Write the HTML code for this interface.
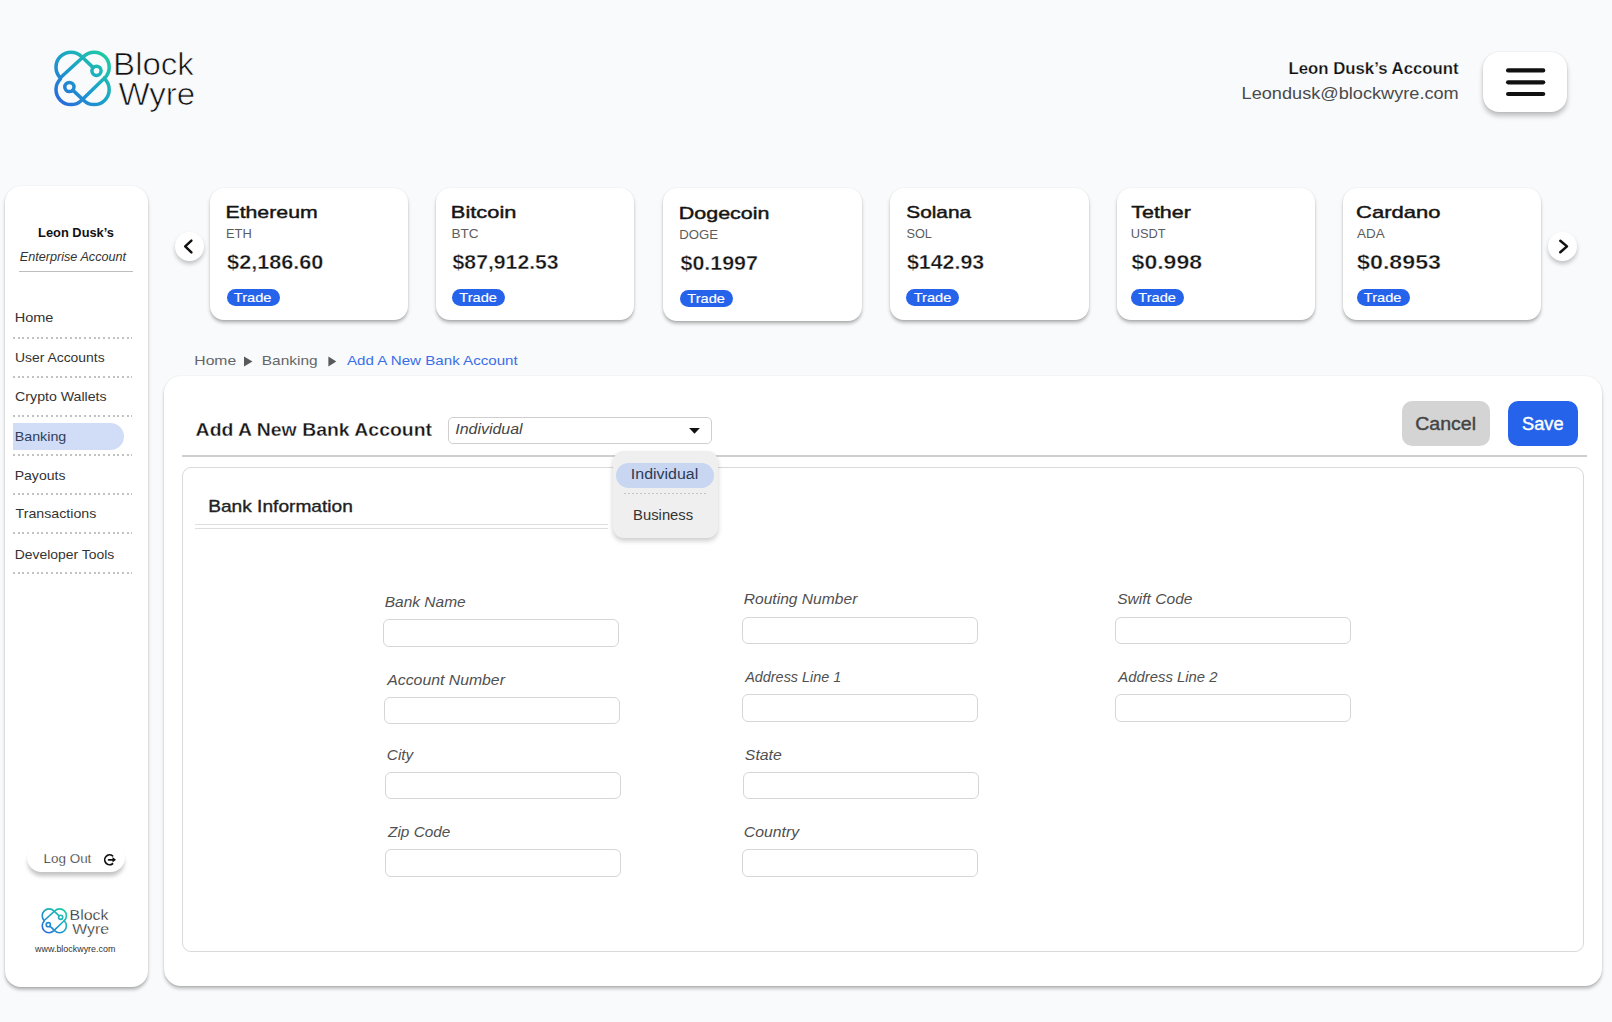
<!DOCTYPE html>
<html><head><meta charset="utf-8"><style>
html,body{margin:0;padding:0;}
body{width:1612px;height:1022px;background:#f8fafc;position:relative;overflow:hidden;font-family:"Liberation Sans",sans-serif;}
svg{position:absolute;left:0;top:0;}
text{font-family:"Liberation Sans",sans-serif;}
</style></head><body>
<div style="position:absolute;left:4.50px;top:186.00px;width:143.50px;height:801.20px;background:#fff;border-radius:16px;box-shadow:0 0.5px 1.5px rgba(0,0,0,0.10),0 3px 3.5px rgba(0,0,0,0.24);"></div>
<div style="position:absolute;left:1483.00px;top:52.00px;width:84.00px;height:60.00px;background:#fff;border-radius:16px;box-shadow:0 0 1.5px rgba(0,0,0,0.14),0 4px 5px rgba(0,0,0,0.24);"></div>
<div style="position:absolute;left:209.50px;top:188.00px;width:198.50px;height:131.60px;background:#fff;border-radius:14px;box-shadow:0 0.5px 1.5px rgba(0,0,0,0.10),0 3px 3.5px rgba(0,0,0,0.24);"></div>
<div style="position:absolute;left:226.50px;top:289.00px;width:53.00px;height:17.30px;background:#2563eb;border-radius:9px;"></div>
<div style="position:absolute;left:435.80px;top:188.00px;width:198.50px;height:131.60px;background:#fff;border-radius:14px;box-shadow:0 0.5px 1.5px rgba(0,0,0,0.10),0 3px 3.5px rgba(0,0,0,0.24);"></div>
<div style="position:absolute;left:452.00px;top:289.00px;width:53.00px;height:17.30px;background:#2563eb;border-radius:9px;"></div>
<div style="position:absolute;left:663.10px;top:188.00px;width:198.50px;height:132.60px;background:#fff;border-radius:14px;box-shadow:0 0.5px 1.5px rgba(0,0,0,0.10),0 3px 3.5px rgba(0,0,0,0.24);"></div>
<div style="position:absolute;left:679.90px;top:290.00px;width:53.00px;height:17.30px;background:#2563eb;border-radius:9px;"></div>
<div style="position:absolute;left:890.40px;top:188.00px;width:198.50px;height:131.60px;background:#fff;border-radius:14px;box-shadow:0 0.5px 1.5px rgba(0,0,0,0.10),0 3px 3.5px rgba(0,0,0,0.24);"></div>
<div style="position:absolute;left:906.30px;top:289.00px;width:53.00px;height:17.30px;background:#2563eb;border-radius:9px;"></div>
<div style="position:absolute;left:1116.80px;top:188.00px;width:198.50px;height:131.60px;background:#fff;border-radius:14px;box-shadow:0 0.5px 1.5px rgba(0,0,0,0.10),0 3px 3.5px rgba(0,0,0,0.24);"></div>
<div style="position:absolute;left:1131.00px;top:289.00px;width:53.00px;height:17.30px;background:#2563eb;border-radius:9px;"></div>
<div style="position:absolute;left:1342.60px;top:188.00px;width:198.50px;height:131.60px;background:#fff;border-radius:14px;box-shadow:0 0.5px 1.5px rgba(0,0,0,0.10),0 3px 3.5px rgba(0,0,0,0.24);"></div>
<div style="position:absolute;left:1356.50px;top:289.00px;width:53.00px;height:17.30px;background:#2563eb;border-radius:9px;"></div>
<div style="position:absolute;left:174.50px;top:232.00px;width:29.00px;height:29.00px;background:#fff;border-radius:50%;box-shadow:0 3px 4px rgba(0,0,0,0.22);"></div>
<div style="position:absolute;left:1547.80px;top:232.00px;width:29.00px;height:29.00px;background:#fff;border-radius:50%;box-shadow:0 3px 4px rgba(0,0,0,0.22);"></div>
<div style="position:absolute;left:19.00px;top:270.80px;width:113.60px;height:1.60px;background:#bdbdbd;"></div>
<div style="position:absolute;left:13.00px;top:422.60px;width:111.00px;height:27.60px;background:#d1ddf6;border-radius:0 14px 14px 0;"></div>
<div style="position:absolute;left:13.00px;top:337.00px;width:118.50px;height:2.00px;background-image:repeating-linear-gradient(90deg,#c2c2c2 0 2px,transparent 2px 4.74px);"></div>
<div style="position:absolute;left:13.00px;top:376.00px;width:118.50px;height:2.00px;background-image:repeating-linear-gradient(90deg,#c2c2c2 0 2px,transparent 2px 4.74px);"></div>
<div style="position:absolute;left:13.00px;top:415.00px;width:118.50px;height:2.00px;background-image:repeating-linear-gradient(90deg,#c2c2c2 0 2px,transparent 2px 4.74px);"></div>
<div style="position:absolute;left:13.00px;top:454.00px;width:118.50px;height:2.00px;background-image:repeating-linear-gradient(90deg,#c2c2c2 0 2px,transparent 2px 4.74px);"></div>
<div style="position:absolute;left:13.00px;top:493.00px;width:118.50px;height:2.00px;background-image:repeating-linear-gradient(90deg,#c2c2c2 0 2px,transparent 2px 4.74px);"></div>
<div style="position:absolute;left:13.00px;top:532.00px;width:118.50px;height:2.00px;background-image:repeating-linear-gradient(90deg,#c2c2c2 0 2px,transparent 2px 4.74px);"></div>
<div style="position:absolute;left:13.00px;top:572.00px;width:118.50px;height:2.00px;background-image:repeating-linear-gradient(90deg,#c2c2c2 0 2px,transparent 2px 4.74px);"></div>
<div style="position:absolute;left:26.80px;top:843.00px;width:98.40px;height:29.20px;background:#fff;border-radius:15px;box-shadow:0 5px 4px -1px rgba(0,0,0,0.24);"></div>
<div style="position:absolute;left:163.50px;top:375.70px;width:1438.20px;height:610.50px;background:#fff;border-radius:17px;box-shadow:0 0.5px 1.5px rgba(0,0,0,0.10),0 3px 3.5px rgba(0,0,0,0.22);"></div>
<div style="position:absolute;left:182.00px;top:455.20px;width:1405.40px;height:1.60px;background:#cfcfcf;"></div>
<div style="position:absolute;left:182.40px;top:467.20px;width:1401.80px;height:484.60px;border:1.6px solid #d9d9d9;border-radius:9px;box-sizing:border-box;"></div>
<div style="position:absolute;left:448.10px;top:417.20px;width:263.50px;height:27.00px;border:1.3px solid #cfcfcf;border-radius:5px;box-sizing:border-box;background:#fff;"></div>
<div style="position:absolute;left:1402.00px;top:401.40px;width:88.00px;height:44.50px;background:#d4d4d4;border-radius:10px;"></div>
<div style="position:absolute;left:1508.00px;top:401.40px;width:69.70px;height:44.50px;background:#2563eb;border-radius:10px;"></div>
<div style="position:absolute;left:194.90px;top:523.80px;width:413.30px;height:1.20px;background:#dedede;"></div>
<div style="position:absolute;left:194.90px;top:527.50px;width:413.30px;height:1.20px;background:#dedede;"></div>
<div style="position:absolute;left:383.40px;top:618.90px;width:235.60px;height:27.70px;border:1.4px solid #d6d6d6;border-radius:6px;box-sizing:border-box;background:#fff;"></div>
<div style="position:absolute;left:384.20px;top:696.60px;width:235.50px;height:27.40px;border:1.4px solid #d6d6d6;border-radius:6px;box-sizing:border-box;background:#fff;"></div>
<div style="position:absolute;left:385.20px;top:772.40px;width:235.40px;height:27.10px;border:1.4px solid #d6d6d6;border-radius:6px;box-sizing:border-box;background:#fff;"></div>
<div style="position:absolute;left:385.20px;top:849.20px;width:235.40px;height:27.40px;border:1.4px solid #d6d6d6;border-radius:6px;box-sizing:border-box;background:#fff;"></div>
<div style="position:absolute;left:742.20px;top:616.50px;width:235.50px;height:27.40px;border:1.4px solid #d6d6d6;border-radius:6px;box-sizing:border-box;background:#fff;"></div>
<div style="position:absolute;left:742.20px;top:694.40px;width:235.50px;height:27.40px;border:1.4px solid #d6d6d6;border-radius:6px;box-sizing:border-box;background:#fff;"></div>
<div style="position:absolute;left:743.20px;top:772.40px;width:235.40px;height:27.10px;border:1.4px solid #d6d6d6;border-radius:6px;box-sizing:border-box;background:#fff;"></div>
<div style="position:absolute;left:742.20px;top:849.20px;width:235.50px;height:27.40px;border:1.4px solid #d6d6d6;border-radius:6px;box-sizing:border-box;background:#fff;"></div>
<div style="position:absolute;left:1115.20px;top:616.50px;width:235.40px;height:27.40px;border:1.4px solid #d6d6d6;border-radius:6px;box-sizing:border-box;background:#fff;"></div>
<div style="position:absolute;left:1115.20px;top:694.40px;width:235.40px;height:27.40px;border:1.4px solid #d6d6d6;border-radius:6px;box-sizing:border-box;background:#fff;"></div>
<div style="position:absolute;left:612.70px;top:450.90px;width:105.30px;height:87.20px;background:#efefef;border-radius:11px;box-shadow:0 3px 5px rgba(0,0,0,0.2);"></div>
<div style="position:absolute;left:616.30px;top:462.60px;width:98.00px;height:25.50px;background:#c8d6f2;border-radius:13px;"></div>
<div style="position:absolute;left:624.40px;top:492.90px;width:83.60px;height:1.20px;background-image:repeating-linear-gradient(90deg,#c4c4c4 0 2px,transparent 2px 4px);"></div>
<svg width="1612" height="1022" viewBox="0 0 1612 1022">

<defs>
<linearGradient id="lg" gradientUnits="userSpaceOnUse" x1="4" y1="62" x2="62" y2="4">
<stop offset="0" stop-color="#2d5fe0"/><stop offset="0.5" stop-color="#1aa3c8"/><stop offset="1" stop-color="#22d49a"/>
</linearGradient>
<g id="logo" fill="none" stroke="url(#lg)" stroke-width="3.5" stroke-linecap="round">
<path d="M10.39,32.81 A15,15 0 0 1 31.61,11.59 L43.17,22.62"/>
<path d="M10.39,32.81 L33.59,11.59 A15,15 0 0 1 54.81,32.81"/>
<path d="M54.81,32.81 L31.61,55.21 A15,15 0 0 1 10.39,33.99 L10.39,32.81"/>
<path d="M22.77,45.13 L33.59,55.21 A15,15 0 0 0 54.81,33.99 L54.81,32.81"/>
<circle cx="46.5" cy="25.8" r="4.6"/>
<circle cx="19.4" cy="42" r="4.6"/>
</g>
</defs>
<use href="#logo" transform="translate(50,45)"/>
<use href="#logo" transform="translate(39.5,905.6) scale(0.4545)"/>
<g stroke="#111" stroke-width="4.2" stroke-linecap="round">
<line x1="1508.1" y1="70.4" x2="1543.2" y2="70.4"/><line x1="1508.1" y1="82.3" x2="1543.2" y2="82.3"/><line x1="1508.1" y1="94" x2="1543.2" y2="94"/>
</g>
<g fill="none" stroke="#111" stroke-width="2.5" stroke-linecap="round" stroke-linejoin="round">
<polyline points="191.4,240.7 185.2,246.4 191.4,252.3"/>
<polyline points="1560.3,240.7 1567,246.4 1560.3,252.3"/>
</g>
<polygon points="244,356.6 252.5,361.6 244,366.6" fill="#5a5a5a"/>
<polygon points="328.4,356.6 336.3,361.6 328.4,366.6" fill="#5a5a5a"/>
<polygon points="689.1,428 699.9,428 694.5,433.8" fill="#111"/>
<g fill="none" stroke="#111" stroke-width="1.7" stroke-linecap="round">
<path d="M112.6,855.9 A4.9,4.9 0 1 0 112.6,863.7"/>
<line x1="108.6" y1="859.8" x2="113" y2="859.8"/>
</g>
<polygon points="112.5,857 116,859.8 112.5,862.6" fill="#111"/>

<text x="113.12" y="75.20" textLength="80.76" lengthAdjust="spacingAndGlyphs" fill="#111" style="font-size:31.72px;font-weight:400;stroke:#f8fafc;stroke-width:0.7px;stroke-linejoin:round;">Block</text>
<text x="118.40" y="104.50" textLength="76.84" lengthAdjust="spacingAndGlyphs" fill="#111" style="font-size:31.00px;font-weight:400;stroke:#f8fafc;stroke-width:0.7px;stroke-linejoin:round;">Wyre</text>
<text x="1288.46" y="74.10" textLength="170.13" lengthAdjust="spacingAndGlyphs" fill="#0d0d0d" style="font-size:16.21px;font-weight:700;stroke:#f8fafc;stroke-width:0.25px;stroke-linejoin:round;">Leon Dusk’s Account</text>
<text x="1241.58" y="98.80" textLength="217.16" lengthAdjust="spacingAndGlyphs" fill="#4a4a4a" style="font-size:16.50px;font-weight:400;">Leondusk@blockwyre.com</text>
<text x="38.10" y="237.00" textLength="75.92" lengthAdjust="spacingAndGlyphs" fill="#111" style="font-size:12.66px;font-weight:700;">Leon Dusk’s</text>
<text x="19.80" y="260.70" textLength="106.26" lengthAdjust="spacingAndGlyphs" fill="#333" style="font-size:11.95px;font-weight:400;font-style:italic;">Enterprise Account</text>
<text x="14.67" y="321.90" textLength="38.72" lengthAdjust="spacingAndGlyphs" fill="#333" style="font-size:12.80px;font-weight:400;">Home</text>
<text x="14.94" y="361.90" textLength="89.69" lengthAdjust="spacingAndGlyphs" fill="#333" style="font-size:12.80px;font-weight:400;">User Accounts</text>
<text x="15.14" y="400.90" textLength="91.51" lengthAdjust="spacingAndGlyphs" fill="#333" style="font-size:12.80px;font-weight:400;">Crypto Wallets</text>
<text x="14.68" y="440.50" textLength="51.62" lengthAdjust="spacingAndGlyphs" fill="#2f3d5c" style="font-size:12.80px;font-weight:400;">Banking</text>
<text x="14.70" y="479.60" textLength="50.74" lengthAdjust="spacingAndGlyphs" fill="#333" style="font-size:12.80px;font-weight:400;">Payouts</text>
<text x="15.58" y="518.00" textLength="80.77" lengthAdjust="spacingAndGlyphs" fill="#333" style="font-size:12.80px;font-weight:400;">Transactions</text>
<text x="14.71" y="558.70" textLength="99.62" lengthAdjust="spacingAndGlyphs" fill="#333" style="font-size:12.80px;font-weight:400;">Developer Tools</text>
<text x="43.55" y="862.90" textLength="47.80" lengthAdjust="spacingAndGlyphs" fill="#1a1a1a" style="font-size:12.52px;font-weight:400;stroke:#fff;stroke-width:0.25px;stroke-linejoin:round;">Log Out</text>
<text x="69.56" y="919.70" textLength="38.89" lengthAdjust="spacingAndGlyphs" fill="#1a1a1a" style="font-size:15.50px;font-weight:400;stroke:#fff;stroke-width:0.3px;stroke-linejoin:round;">Block</text>
<text x="72.30" y="933.80" textLength="36.74" lengthAdjust="spacingAndGlyphs" fill="#1a1a1a" style="font-size:15.08px;font-weight:400;stroke:#fff;stroke-width:0.3px;stroke-linejoin:round;">Wyre</text>
<text x="35.14" y="952.30" textLength="80.22" lengthAdjust="spacingAndGlyphs" fill="#333" style="font-size:8.39px;font-weight:400;">www.blockwyre.com</text>
<text x="225.44" y="217.90" textLength="92.26" lengthAdjust="spacingAndGlyphs" fill="#151515" style="font-size:17.35px;font-weight:400;stroke:#151515;stroke-width:0.45px;stroke-linejoin:round;">Ethereum</text>
<text x="225.99" y="238.00" textLength="25.76" lengthAdjust="spacingAndGlyphs" fill="#5c5c5c" style="font-size:12.94px;font-weight:400;">ETH</text>
<text x="227.10" y="269.20" textLength="96.28" lengthAdjust="spacingAndGlyphs" fill="#151515" style="font-size:20.48px;font-weight:700;stroke:#fff;stroke-width:0.35px;stroke-linejoin:round;">$2,186.60</text>
<text x="233.87" y="301.80" textLength="37.62" lengthAdjust="spacingAndGlyphs" fill="#fff" style="font-size:12.52px;font-weight:400;stroke:#fff;stroke-width:0.15px;stroke-linejoin:round;">Trade</text>
<text x="450.89" y="217.90" textLength="65.53" lengthAdjust="spacingAndGlyphs" fill="#151515" style="font-size:17.35px;font-weight:400;stroke:#151515;stroke-width:0.45px;stroke-linejoin:round;">Bitcoin</text>
<text x="451.44" y="238.00" textLength="27.13" lengthAdjust="spacingAndGlyphs" fill="#5c5c5c" style="font-size:12.94px;font-weight:400;">BTC</text>
<text x="452.60" y="269.20" textLength="106.03" lengthAdjust="spacingAndGlyphs" fill="#151515" style="font-size:20.48px;font-weight:700;stroke:#fff;stroke-width:0.35px;stroke-linejoin:round;">$87,912.53</text>
<text x="459.37" y="301.80" textLength="37.62" lengthAdjust="spacingAndGlyphs" fill="#fff" style="font-size:12.52px;font-weight:400;stroke:#fff;stroke-width:0.15px;stroke-linejoin:round;">Trade</text>
<text x="678.82" y="218.90" textLength="90.68" lengthAdjust="spacingAndGlyphs" fill="#151515" style="font-size:17.35px;font-weight:400;stroke:#151515;stroke-width:0.45px;stroke-linejoin:round;">Dogecoin</text>
<text x="679.37" y="239.00" textLength="38.78" lengthAdjust="spacingAndGlyphs" fill="#5c5c5c" style="font-size:12.94px;font-weight:400;">DOGE</text>
<text x="680.50" y="270.20" textLength="77.37" lengthAdjust="spacingAndGlyphs" fill="#151515" style="font-size:20.48px;font-weight:700;stroke:#fff;stroke-width:0.35px;stroke-linejoin:round;">$0.1997</text>
<text x="687.27" y="302.80" textLength="37.62" lengthAdjust="spacingAndGlyphs" fill="#fff" style="font-size:12.52px;font-weight:400;stroke:#fff;stroke-width:0.15px;stroke-linejoin:round;">Trade</text>
<text x="906.25" y="217.90" textLength="64.82" lengthAdjust="spacingAndGlyphs" fill="#151515" style="font-size:17.35px;font-weight:400;stroke:#151515;stroke-width:0.45px;stroke-linejoin:round;">Solana</text>
<text x="906.40" y="238.00" textLength="25.52" lengthAdjust="spacingAndGlyphs" fill="#5c5c5c" style="font-size:12.94px;font-weight:400;">SOL</text>
<text x="906.90" y="269.20" textLength="77.33" lengthAdjust="spacingAndGlyphs" fill="#151515" style="font-size:20.48px;font-weight:700;stroke:#fff;stroke-width:0.35px;stroke-linejoin:round;">$142.93</text>
<text x="913.67" y="301.80" textLength="37.62" lengthAdjust="spacingAndGlyphs" fill="#fff" style="font-size:12.52px;font-weight:400;stroke:#fff;stroke-width:0.15px;stroke-linejoin:round;">Trade</text>
<text x="1131.26" y="217.90" textLength="59.64" lengthAdjust="spacingAndGlyphs" fill="#151515" style="font-size:17.35px;font-weight:400;stroke:#151515;stroke-width:0.45px;stroke-linejoin:round;">Tether</text>
<text x="1130.70" y="238.00" textLength="34.92" lengthAdjust="spacingAndGlyphs" fill="#5c5c5c" style="font-size:12.94px;font-weight:400;">USDT</text>
<text x="1131.60" y="269.20" textLength="70.47" lengthAdjust="spacingAndGlyphs" fill="#151515" style="font-size:20.48px;font-weight:700;stroke:#fff;stroke-width:0.35px;stroke-linejoin:round;">$0.998</text>
<text x="1138.37" y="301.80" textLength="37.62" lengthAdjust="spacingAndGlyphs" fill="#fff" style="font-size:12.52px;font-weight:400;stroke:#fff;stroke-width:0.15px;stroke-linejoin:round;">Trade</text>
<text x="1356.07" y="217.90" textLength="84.32" lengthAdjust="spacingAndGlyphs" fill="#151515" style="font-size:17.35px;font-weight:400;stroke:#151515;stroke-width:0.45px;stroke-linejoin:round;">Cardano</text>
<text x="1357.00" y="238.00" textLength="27.63" lengthAdjust="spacingAndGlyphs" fill="#5c5c5c" style="font-size:12.94px;font-weight:400;">ADA</text>
<text x="1357.10" y="269.20" textLength="83.88" lengthAdjust="spacingAndGlyphs" fill="#151515" style="font-size:20.48px;font-weight:700;stroke:#fff;stroke-width:0.35px;stroke-linejoin:round;">$0.8953</text>
<text x="1363.87" y="301.80" textLength="37.62" lengthAdjust="spacingAndGlyphs" fill="#fff" style="font-size:12.52px;font-weight:400;stroke:#fff;stroke-width:0.15px;stroke-linejoin:round;">Trade</text>
<text x="194.27" y="365.20" textLength="41.97" lengthAdjust="spacingAndGlyphs" fill="#666" style="font-size:12.94px;font-weight:400;">Home</text>
<text x="261.79" y="365.20" textLength="55.88" lengthAdjust="spacingAndGlyphs" fill="#666" style="font-size:12.94px;font-weight:400;">Banking</text>
<text x="347.00" y="365.20" textLength="170.75" lengthAdjust="spacingAndGlyphs" fill="#3a6ee8" style="font-size:12.94px;font-weight:400;">Add A New Bank Account</text>
<text x="195.60" y="435.50" textLength="236.49" lengthAdjust="spacingAndGlyphs" fill="#151515" style="font-size:17.78px;font-weight:700;stroke:#fff;stroke-width:0.3px;stroke-linejoin:round;">Add A New Bank Account</text>
<text x="455.30" y="434.10" textLength="67.35" lengthAdjust="spacingAndGlyphs" fill="#444" style="font-size:13.94px;font-weight:400;font-style:italic;">Individual</text>
<text x="1415.18" y="430.00" textLength="60.91" lengthAdjust="spacingAndGlyphs" fill="#444" style="font-size:18.49px;font-weight:400;stroke:#444;stroke-width:0.4px;stroke-linejoin:round;">Cancel</text>
<text x="1522.03" y="430.00" textLength="41.51" lengthAdjust="spacingAndGlyphs" fill="#fff" style="font-size:17.92px;font-weight:400;stroke:#fff;stroke-width:0.4px;stroke-linejoin:round;">Save</text>
<text x="208.20" y="512.30" textLength="144.67" lengthAdjust="spacingAndGlyphs" fill="#222" style="font-size:16.78px;font-weight:400;stroke:#222;stroke-width:0.35px;stroke-linejoin:round;">Bank Information</text>
<text x="630.85" y="478.80" textLength="67.40" lengthAdjust="spacingAndGlyphs" fill="#2d3a55" style="font-size:14.08px;font-weight:400;">Individual</text>
<text x="633.14" y="520.10" textLength="60.02" lengthAdjust="spacingAndGlyphs" fill="#333" style="font-size:14.08px;font-weight:400;">Business</text>
<text x="384.76" y="606.80" textLength="80.93" lengthAdjust="spacingAndGlyphs" fill="#505050" style="font-size:13.80px;font-weight:400;font-style:italic;">Bank Name</text>
<text x="387.29" y="684.70" textLength="117.65" lengthAdjust="spacingAndGlyphs" fill="#505050" style="font-size:13.80px;font-weight:400;font-style:italic;">Account Number</text>
<text x="386.88" y="760.30" textLength="26.36" lengthAdjust="spacingAndGlyphs" fill="#505050" style="font-size:13.80px;font-weight:400;font-style:italic;">City</text>
<text x="388.08" y="836.90" textLength="62.30" lengthAdjust="spacingAndGlyphs" fill="#505050" style="font-size:13.80px;font-weight:400;font-style:italic;">Zip Code</text>
<text x="743.76" y="604.40" textLength="113.59" lengthAdjust="spacingAndGlyphs" fill="#505050" style="font-size:13.80px;font-weight:400;font-style:italic;">Routing Number</text>
<text x="745.20" y="682.10" textLength="96.13" lengthAdjust="spacingAndGlyphs" fill="#505050" style="font-size:13.80px;font-weight:400;font-style:italic;">Address Line 1</text>
<text x="744.85" y="760.30" textLength="36.94" lengthAdjust="spacingAndGlyphs" fill="#505050" style="font-size:13.80px;font-weight:400;font-style:italic;">State</text>
<text x="743.86" y="836.90" textLength="55.15" lengthAdjust="spacingAndGlyphs" fill="#505050" style="font-size:13.80px;font-weight:400;font-style:italic;">Country</text>
<text x="1117.16" y="604.40" textLength="75.33" lengthAdjust="spacingAndGlyphs" fill="#505050" style="font-size:13.80px;font-weight:400;font-style:italic;">Swift Code</text>
<text x="1118.33" y="682.10" textLength="99.21" lengthAdjust="spacingAndGlyphs" fill="#505050" style="font-size:13.80px;font-weight:400;font-style:italic;">Address Line 2</text>
</svg>
</body></html>
